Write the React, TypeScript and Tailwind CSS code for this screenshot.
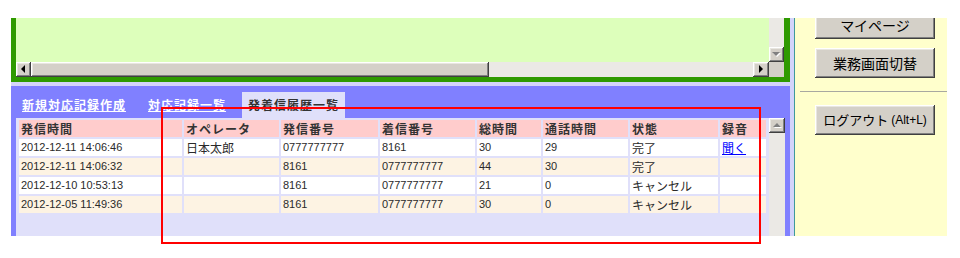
import React from "react";

const btn3d =
  "bg-[#d4d0c8] shadow-[inset_-1px_-1px_#404040,inset_1px_1px_#ffffff,inset_-2px_-2px_#808080,inset_2px_2px_#e8e6e0]";

function Arrow({ dir, disabled }: { dir: "up" | "down" | "left" | "right"; disabled?: boolean }) {
  const pts: Record<string, string> = {
    up: "0,4 4,0 8,4",
    down: "0,0 8,0 4,4",
    left: "4,0 4,8 0,4",
    right: "0,0 0,8 4,4",
  };
  const w = dir === "up" || dir === "down" ? 8 : 4;
  const h = dir === "up" || dir === "down" ? 4 : 8;
  return (
    <svg width={w + 1} height={h + 1} viewBox={`0 0 ${w + 1} ${h + 1}`}>
      {disabled && <polygon points={pts[dir]} fill="#ffffff" transform="translate(1,1)" />}
      <polygon points={pts[dir]} fill={disabled ? "#808080" : "#000000"} />
    </svg>
  );
}

function SBtn({ dir, disabled, className = "" }: { dir: "up" | "down" | "left" | "right"; disabled?: boolean; className?: string }) {
  return (
    <div className={`${btn3d} flex items-center justify-center ${className}`}>
      <Arrow dir={dir} disabled={disabled} />
    </div>
  );
}

const FONT = "font-['Liberation_Sans','Noto_Sans_CJK_JP',sans-serif]";
const CJK = "font-['Noto_Sans_CJK_JP','Liberation_Sans',sans-serif]";

const headers = ["発信時間", "オペレータ", "発信番号", "着信番号", "総時間", "通話時間", "状態", "録音"];
const rows: string[][] = [
  ["2012-12-11 14:06:46", "日本太郎", "0777777777", "8161", "30", "29", "完了", "聞く"],
  ["2012-12-11 14:06:32", "", "8161", "0777777777", "44", "30", "完了", ""],
  ["2012-12-10 10:53:13", "", "8161", "0777777777", "21", "0", "キャンセル", ""],
  ["2012-12-05 11:49:36", "", "8161", "0777777777", "30", "0", "キャンセル", ""],
];

function Cell({ v, bg }: { v: string; bg: string }) {
  const numeric = /^[\d\-: ]*$/.test(v);
  if (v === "聞く") {
    return (
      <div className={`${bg} h-[17px] pl-[2px] leading-[17px] ${CJK} text-[12px] text-[#0000ff] underline`}>
        {v}
      </div>
    );
  }
  return (
    <div
      className={`${bg} h-[17px] pl-[2px] leading-[17px] text-[#2a2a2a] whitespace-nowrap ${
        numeric ? `${FONT} text-[11px]` : `${CJK} text-[12px]`
      }`}
    >
      {v}
    </div>
  );
}

export default function App() {
  return (
    <div className="relative w-[960px] h-[258px] bg-white overflow-hidden">
      <div className="flex pt-[18px] pl-[11px] h-[236px]">
        {/* left frame */}
        <div className="w-[783px] h-[218px] bg-[#d4d4fa] flex flex-col pr-[4px]">
          {/* green panel */}
          <div className="h-[64px] border-l-[5px] border-r-[6px] border-b-[5px] border-[#2f9a00] flex flex-col">
            <div className="flex h-[44px]">
              <div className="w-[753px] bg-[#ddffbb]" />
              <div className="w-[15px] flex flex-col">
                <div className="flex-1 bg-[#ebe9e5]" />
                <SBtn dir="down" disabled className="h-[15px]" />
              </div>
            </div>
            <div className="flex h-[15px]">
              <SBtn dir="left" className="w-[15px]" />
              <div className={`w-[458px] ${btn3d}`} />
              <div className="w-[264px] bg-[#ebe9e5]" />
              <SBtn dir="right" className="w-[16px]" />
              <div className="w-[15px] bg-[#d4d0c8]" />
            </div>
          </div>
          {/* blue panel */}
          <div className="mt-[4px] h-[150px] bg-[#8080ff] px-[5px] flex flex-col">
            <div className={`h-[32px] flex items-end ${CJK} text-[12px] font-bold tracking-[1px]`}>
              <div className="h-[26px] px-[6px] flex items-center text-white underline">新規対応記録作成</div>
              <div className="ml-[10px] h-[26px] px-[6px] flex items-center text-white underline">対応記録一覧</div>
              <div className="ml-[10px] h-[26px] px-[6px] flex items-center bg-[#e0e0fa] text-[#333333]">
                発着信履歴一覧
              </div>
            </div>
            <div className="flex h-[118px]">
              <div className="w-[753px] bg-[#e0e0fa] pl-[3px] pt-[2px]">
                <div className="grid grid-cols-[163px_95px_97px_95px_64px_85px_88px_46px] gap-[2px]">
                  {headers.map((h) => (
                    <div
                      key={h}
                      className={`bg-[#ffcccc] h-[17px] pl-[2px] leading-[17px] ${CJK} text-[12px] font-bold tracking-[1px] text-[#333333] whitespace-nowrap`}
                    >
                      {h}
                    </div>
                  ))}
                  {rows.map((r, i) =>
                    r.map((v, j) => (
                      <Cell key={`${i}-${j}`} v={v} bg={i % 2 === 0 ? "bg-white" : "bg-[#fdf3e3]"} />
                    ))
                  )}
                </div>
              </div>
              <div className="w-[16px] flex flex-col">
                <SBtn dir="up" disabled className="h-[15px]" />
                <div className="flex-1 bg-[#ebe9e5]" />
              </div>
            </div>
          </div>
        </div>
        {/* teal line */}
        <div className="w-px h-[218px] bg-[#3f9a9a]" />
        {/* right yellow panel */}
        <div className="w-[152px] h-[218px] bg-[#ffffcc] overflow-hidden flex flex-col">
          <div className={`ml-[20px] -mt-[7px] w-[120px] h-[28px] ${btn3d} flex items-center justify-center ${CJK} text-[14px] leading-[16px] text-black`}>
            マイページ
          </div>
          <div className={`ml-[20px] mt-[9px] w-[120px] h-[30px] ${btn3d} flex items-center justify-center ${CJK} text-[14px] text-black`}>
            業務画面切替
          </div>
          <div className="ml-[5px] mt-[13px] h-px bg-[#a8a8a0]" />
          <div className={`ml-[20px] mt-[13px] w-[120px] h-[30px] ${btn3d} flex items-center justify-center ${CJK} text-[13px] text-black whitespace-nowrap`}>
            ログアウト<span className={`${FONT} text-[12px] ml-[3px]`}>(Alt+L)</span>
          </div>
        </div>
      </div>
      {/* red annotation box */}
      <div className="absolute left-[161px] top-[107px] w-[600px] h-[137px] border-2 border-[#ff0000]" />
    </div>
  );
}
